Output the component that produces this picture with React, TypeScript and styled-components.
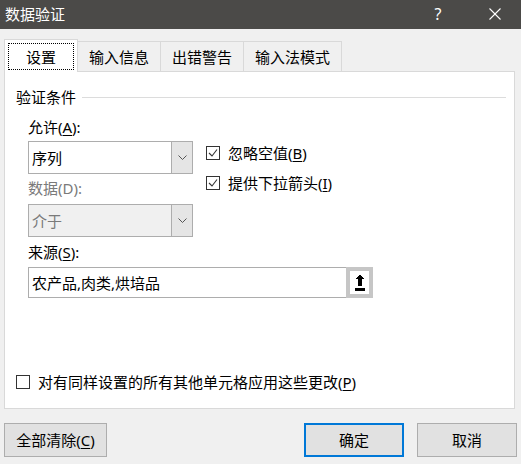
import React from 'react';
import styled, { createGlobalStyle } from 'styled-components';

const Global = createGlobalStyle`
  html, body { margin: 0; padding: 0; background: #f0f0f0; }
  body {
    font-family: "Noto Sans", "Noto Sans CJK SC", sans-serif;
    font-size: 15px;
    color: #000;
  }
  * { box-sizing: border-box; }
  u { text-underline-offset: 2px; }
`;

const Window = styled.div`
  width: 521px;
  height: 464px;
  display: flex;
  flex-direction: column;
  background: #f0f0f0;
  overflow: hidden;
`;

const TitleBar = styled.div`
  flex: none;
  height: 29px;
  background: #4b4a48;
  color: #fff;
  display: flex;
  align-items: center;
  padding-left: 5px;
`;

const Title = styled.div`
  flex: 1;
  font-family: "Noto Sans CJK SC", sans-serif;
  font-size: 15px;
  line-height: 20px;
  margin-top: -2px;
`;

const TitleButton = styled.div<{ $mr: number }>`
  width: 46px;
  height: 29px;
  display: flex;
  align-items: center;
  justify-content: center;
  margin-right: ${(p) => p.$mr}px;
  font-size: 16px;
  line-height: 20px;
  color: #fff;
  margin-top: -2px;
`;

const Body = styled.div`
  display: flex;
  flex-direction: column;
  padding: 10px 4px 0 4px;
`;

const TabStrip = styled.div`
  display: flex;
  align-items: flex-start;
  height: 32px;
`;

const Tab = styled.div<{ $active?: boolean }>`
  position: relative;
  z-index: 1;
  display: flex;
  align-items: center;
  justify-content: center;
  line-height: 20px;
  white-space: nowrap;
  border-top: 1px solid #d9d9d9;
  border-right: 1px solid #d9d9d9;
  ${(p) =>
    p.$active
      ? `
    height: 33px;
    background: #fff;
    border-left: 1px solid #d9d9d9;
    padding: 3px;
  `
      : `
    height: 30px;
    margin-top: 2px;
    background: #f0f0f0;
    padding: 0 11px;
    padding-top: 1px;
  `}
`;

const FocusRing = styled.span`
  display: flex;
  align-items: center;
  justify-content: center;
  width: 66px;
  height: 27px;
  border: 1px dotted #000;
  margin-top: 1px;
`;

const Panel = styled.div`
  height: 338px;
  margin-right: 2px;
  background: #fff;
  border: 1px solid #d9d9d9;
  display: flex;
  flex-direction: column;
  padding: 15px 8px 16px 11px;
`;

const Legend = styled.div`
  display: flex;
  align-items: center;
  gap: 6px;
  height: 20px;
  line-height: 20px;
`;

const LegendLine = styled.div`
  flex: 1;
  height: 1px;
  background: #dcdcdc;
`;

const Fields = styled.div`
  margin-left: 12px;
  margin-top: 10px;
  display: flex;
  flex-direction: column;
`;

const Row = styled.div`
  display: flex;
`;

const LeftCol = styled.div`
  width: 165px;
  display: flex;
  flex-direction: column;
`;

const RightCol = styled.div`
  margin-left: 13px;
  padding-top: 26px;
  display: flex;
  flex-direction: column;
  gap: 10px;
`;

const Label = styled.div<{ $mt?: number; $disabled?: boolean }>`
  height: 20px;
  line-height: 20px;
  margin-top: ${(p) => p.$mt ?? 0}px;
  color: ${(p) => (p.$disabled ? '#7a7a7a' : '#000')};
  white-space: nowrap;
`;

const Select = styled.div<{ $mt: number; $disabled?: boolean }>`
  margin-top: ${(p) => p.$mt}px;
  height: 33px;
  display: flex;
  border: 1px solid #adadad;
  background: ${(p) => (p.$disabled ? '#f0f0f0' : '#fff')};
  color: ${(p) => (p.$disabled ? '#7a7a7a' : '#000')};
`;

const SelectValue = styled.div`
  flex: 1;
  display: flex;
  align-items: center;
  padding-left: 3px;
  line-height: 20px;
`;

const SelectButton = styled.div`
  width: 21px;
  display: flex;
  align-items: center;
  justify-content: center;
  background: #e5e5e5;
  border-left: 1px solid #adadad;
`;

const CheckRow = styled.label`
  display: flex;
  align-items: center;
  height: 20px;
  line-height: 20px;
  white-space: nowrap;
`;

const Box = styled.span`
  flex: none;
  width: 14px;
  height: 14px;
  border: 1px solid #333;
  background: #fff;
  display: flex;
  align-items: center;
  justify-content: center;
  margin-right: 8px;
`;

const InputBox = styled.div`
  margin-top: 5px;
  width: 345px;
  height: 31px;
  display: flex;
  border: 1px solid #adadad;
  background: #fff;
`;

const InputText = styled.div`
  flex: 1;
  display: flex;
  align-items: center;
  padding-left: 3px;
  line-height: 20px;
`;

const PickButton = styled.div`
  width: 27px;
  margin: -1px -1px -1px 0;
  border: 4px solid #c6c6c6;
  background: #fff;
  display: flex;
  align-items: center;
  justify-content: center;
`;

const BottomCheck = styled(CheckRow)`
  margin-top: auto;
`;

const Footer = styled.div`
  display: flex;
  align-items: center;
  margin-top: 14px;
`;

const Button = styled.div<{ $primary?: boolean; $w: number }>`
  width: ${(p) => p.$w}px;
  height: 34px;
  display: flex;
  align-items: center;
  justify-content: center;
  background: #e1e1e1;
  border: ${(p) => (p.$primary ? '2px solid #0078d7' : '1px solid #adadad')};
  line-height: 20px;
  white-space: nowrap;
`;

const Spacer = styled.div`
  flex: 1;
`;

const Gap = styled.div`
  width: 13px;
`;

const Chevron = () => (
  <svg width="9" height="5" viewBox="0 0 9 5">
    <polyline points="0.5,0.5 4.5,4.5 8.5,0.5" fill="none" stroke="#555" strokeWidth="1" />
  </svg>
);

const Check = () => (
  <svg width="12" height="12" viewBox="0 0 12 12">
    <polyline points="2,6 5,9 10,2.5" fill="none" stroke="#333" strokeWidth="1.1" />
  </svg>
);

const UpArrow = () => (
  <svg width="10" height="17" viewBox="0 0 10 17" shapeRendering="crispEdges">
    <polygon points="5,0 9,5 7,5 7,12 3,12 3,5 1,5" fill="#000" />
    <rect x="0" y="14" width="10" height="3" fill="#000" />
  </svg>
);

const CloseIcon = () => (
  <svg width="12" height="12" viewBox="0 0 12 12">
    <line x1="0.5" y1="0.5" x2="11.5" y2="11.5" stroke="#fff" strokeWidth="1.1" />
    <line x1="11.5" y1="0.5" x2="0.5" y2="11.5" stroke="#fff" strokeWidth="1.1" />
  </svg>
);

export default function App() {
  return (
    <>
      <Global />
      <Window>
        <TitleBar>
          <Title>数据验证</Title>
          <TitleButton $mr={11}>?</TitleButton>
          <TitleButton $mr={3}>
            <CloseIcon />
          </TitleButton>
        </TitleBar>
        <Body>
          <TabStrip>
            <Tab $active>
              <FocusRing>设置</FocusRing>
            </Tab>
            <Tab>输入信息</Tab>
            <Tab>出错警告</Tab>
            <Tab>输入法模式</Tab>
          </TabStrip>
          <Panel>
            <Legend>
              <span>验证条件</span>
              <LegendLine />
            </Legend>
            <Fields>
              <Row>
                <LeftCol>
                  <Label>
                    允许(<u>A</u>):
                  </Label>
                  <Select $mt={4}>
                    <SelectValue>序列</SelectValue>
                    <SelectButton>
                      <Chevron />
                    </SelectButton>
                  </Select>
                  <Label $mt={4} $disabled>
                    数据(D):
                  </Label>
                  <Select $mt={6} $disabled>
                    <SelectValue>介于</SelectValue>
                    <SelectButton>
                      <Chevron />
                    </SelectButton>
                  </Select>
                </LeftCol>
                <RightCol>
                  <CheckRow>
                    <Box>
                      <Check />
                    </Box>
                    忽略空值(<u>B</u>)
                  </CheckRow>
                  <CheckRow>
                    <Box>
                      <Check />
                    </Box>
                    提供下拉箭头(<u>I</u>)
                  </CheckRow>
                </RightCol>
              </Row>
              <Label $mt={5}>
                来源(<u>S</u>):
              </Label>
              <InputBox>
                <InputText>农产品,肉类,烘培品</InputText>
                <PickButton>
                  <UpArrow />
                </PickButton>
              </InputBox>
            </Fields>
            <BottomCheck>
              <Box />
              对有同样设置的所有其他单元格应用这些更改(<u>P</u>)
            </BottomCheck>
          </Panel>
          <Footer>
            <Button $w={103}>
              全部清除(<u>C</u>)
            </Button>
            <Spacer />
            <Button $w={100} $primary>
              确定
            </Button>
            <Gap />
            <Button $w={100}>取消</Button>
          </Footer>
        </Body>
      </Window>
    </>
  );
}
